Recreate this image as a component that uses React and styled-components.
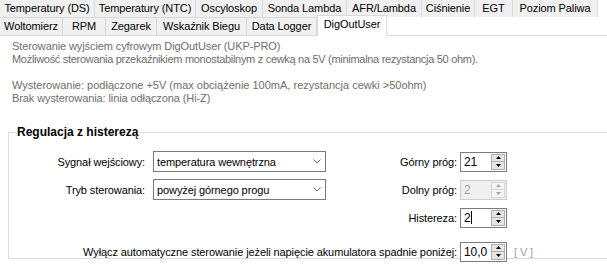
import React from 'react';
import styled, { createGlobalStyle } from 'styled-components';

const GlobalStyle = createGlobalStyle`
  html, body { margin: 0; padding: 0; background: #ffffff; }
  body {
    font-family: "Liberation Sans", Arial, sans-serif;
    font-size: 11px;
    color: #000000;
  }
`;

const Window = styled.div`
  width: 607px;
  height: 276px;
  overflow: hidden;
  background: #ffffff;
  letter-spacing: -0.1px;
`;

const TabStrip = styled.div`
  display: flex;
  flex-direction: column;
`;

const TabRow = styled.div`
  display: flex;
  height: ${p => p.$h}px;
`;

const Tab = styled.div`
  box-sizing: border-box;
  flex: none;
  width: ${p => p.$w}px;
  height: 100%;
  background: #f0f0f0;
  border-right: 1px solid #d9d9d9;
  border-top: ${p => (p.$topBorder ? '1px solid #d9d9d9' : 'none')};
  text-align: center;
  line-height: 17px;
  white-space: nowrap;
`;

const ActiveTab = styled.div`
  box-sizing: border-box;
  position: relative;
  z-index: 1;
  flex: none;
  width: ${p => p.$w}px;
  height: 21px;
  margin-top: -2px;
  background: #ffffff;
  border: 1px solid #d9d9d9;
  border-bottom: none;
  text-align: center;
  line-height: 17px;
  white-space: nowrap;
`;

const Page = styled.div`
  border-top: 1px solid #d9d9d9;
  background: #ffffff;
`;

const Info = styled.div`
  padding: 4px 0 0 12px;
  color: #6d6d6d;
  line-height: 13px;
  display: flex;
  flex-direction: column;
  gap: 13px;
`;

const Para = styled.div`
  display: flex;
  flex-direction: column;
`;

const Line = styled.span`
  white-space: nowrap;
  letter-spacing: ${p => p.$ls ?? -0.1}px;
`;

const Group = styled.fieldset`
  margin: 20px -4px 0 8px;
  padding: 12px 0 2px 0;
  border: 1px solid #dcdcdc;
  min-width: 0;
`;

const GroupTitle = styled.legend`
  margin-left: 7px;
  padding: 0 1px;
  font-size: 12px;
  font-weight: bold;
  line-height: 14px;
  letter-spacing: 0;
`;

const FormGrid = styled.div`
  display: grid;
  grid-template-columns: 144px 173px 134px 47px auto;
  grid-auto-rows: 21px;
  row-gap: 7px;
  align-items: center;
`;

const Label = styled.div`
  grid-column: ${p => p.$col || 'auto'};
  text-align: right;
  padding-right: ${p => p.$pr ?? 8}px;
  white-space: nowrap;
  color: #000;
`;

const Spacer = styled.div``;

const BottomRow = styled.div`
  display: contents;
  & > * { margin-top: 12px; }
`;

const Combo = styled.div`
  box-sizing: border-box;
  height: 21px;
  border: 1px solid #7a7a7a;
  background: #fff;
  display: flex;
  align-items: center;
  padding-left: 3px;
`;

const ComboText = styled.span`
  flex: 1;
  white-space: nowrap;
`;

const ComboArrow = styled.span`
  width: 17px;
  display: flex;
  align-items: center;
  justify-content: center;
`;

const Spin = styled.div`
  box-sizing: border-box;
  width: 47px;
  height: 20px;
  display: flex;
  border: 1px solid ${p => (p.$disabled ? '#cccccc' : '#7a7a7a')};
  background: ${p => (p.$disabled ? '#f0f0f0' : '#ffffff')};
  padding: 1px 1px 1px 0;
`;

const SpinValue = styled.div`
  flex: 1;
  display: flex;
  align-items: center;
  padding-left: 3px;
  font-size: 12px;
  color: ${p => (p.$disabled ? '#a0a0a0' : '#000')};
`;

const Caret = styled.span`
  display: inline-block;
  width: 1px;
  height: 13px;
  background: #000;
`;

const SpinButtons = styled.div`
  width: 14px;
  display: flex;
  flex-direction: column;
`;

const SpinButton = styled.div`
  box-sizing: border-box;
  flex: 1;
  border: 1px solid ${p => (p.$disabled ? '#d6d6d6' : '#adadad')};
  background: ${p => (p.$disabled ? '#f4f4f4' : '#e5e5e5')};
  display: flex;
  align-items: center;
  justify-content: center;
  & + & { margin-top: -1px; }
`;

const Unit = styled.div`
  padding-left: 7px;
  color: #a0a0a0;
  white-space: nowrap;
`;

const Chevron = () => (
  <svg width="8" height="5" viewBox="0 0 8 5">
    <polyline points="0.5,0.5 4,4 7.5,0.5" fill="none" stroke="#6a6a6a" strokeWidth="1" />
  </svg>
);

const Tri = ({ up, color }) => (
  <svg width="5" height="3" viewBox="0 0 5 3">
    {up ? <polygon points="2.5,0 5,3 0,3" fill={color} /> : <polygon points="0,0 5,0 2.5,3" fill={color} />}
  </svg>
);

const Spinner = ({ value, disabled, caret }) => {
  const c = disabled ? '#a6a6a6' : '#000';
  return (
    <Spin $disabled={disabled}>
      <SpinValue $disabled={disabled}>
        {value}
        {caret && <Caret />}
      </SpinValue>
      <SpinButtons>
        <SpinButton $disabled={disabled}><Tri up color={c} /></SpinButton>
        <SpinButton $disabled={disabled}><Tri color={c} /></SpinButton>
      </SpinButtons>
    </Spin>
  );
};

const row1 = [
  ['Temperatury (DS)', 95],
  ['Temperatury (NTC)', 101],
  ['Oscyloskop', 67],
  ['Sonda Lambda', 84],
  ['AFR/Lambda', 75],
  ['Ciśnienie', 53],
  ['EGT', 38],
  ['Poziom Paliwa', 85],
];

const row2 = [
  ['Woltomierz', 63],
  ['RPM', 43],
  ['Zegarek', 51],
  ['Wskaźnik Biegu', 90],
  ['Data Logger', 70],
];

export default function App() {
  return (
    <>
      <GlobalStyle />
      <Window>
        <TabStrip>
          <TabRow $h={17}>
            {row1.map(([t, w]) => (
              <Tab key={t} $w={w}>{t}</Tab>
            ))}
          </TabRow>
          <TabRow $h={18}>
            {row2.map(([t, w]) => (
              <Tab key={t} $w={w} $topBorder>{t}</Tab>
            ))}
            <ActiveTab $w={70}>DigOutUser</ActiveTab>
          </TabRow>
        </TabStrip>
        <Page>
          <Info>
            <Para>
              <Line>Sterowanie wyjściem cyfrowym DigOutUser (UKP-PRO)</Line>
              <Line $ls={-0.3}>
                Możliwość sterowania przekaźnikiem monostabilnym z cewką na 5V (minimalna rezystancja 50 ohm).
              </Line>
            </Para>
            <Para>
              <Line $ls={0}>
                Wysterowanie: podłączone +5V (max obciążenie 100mA, rezystancja cewki &gt;50ohm)
              </Line>
              <Line>Brak wysterowania: linia odłączona (Hi-Z)</Line>
            </Para>
          </Info>
          <Group>
            <GroupTitle>Regulacja z histerezą</GroupTitle>
            <FormGrid>
              <Label>Sygnał wejściowy:</Label>
              <Combo>
                <ComboText>temperatura wewnętrzna</ComboText>
                <ComboArrow><Chevron /></ComboArrow>
              </Combo>
              <Label $pr={3}>Górny próg:</Label>
              <Spinner value="21" />
              <Spacer />

              <Label>Tryb sterowania:</Label>
              <Combo>
                <ComboText>powyżej górnego progu</ComboText>
                <ComboArrow><Chevron /></ComboArrow>
              </Combo>
              <Label $pr={3}>Dolny próg:</Label>
              <Spinner value="2" disabled />
              <Spacer />

              <Label $col="3" $pr={3}>Histereza:</Label>
              <Spinner value="2" caret />
              <Spacer />

              <BottomRow>
                <Label $col="1 / 4" $pr={3}>
                  Wyłącz automatyczne sterowanie jeżeli napięcie akumulatora spadnie poniżej:
                </Label>
                <Spinner value="10,0" />
                <Unit>[ V ]</Unit>
              </BottomRow>
            </FormGrid>
          </Group>
        </Page>
      </Window>
    </>
  );
}
